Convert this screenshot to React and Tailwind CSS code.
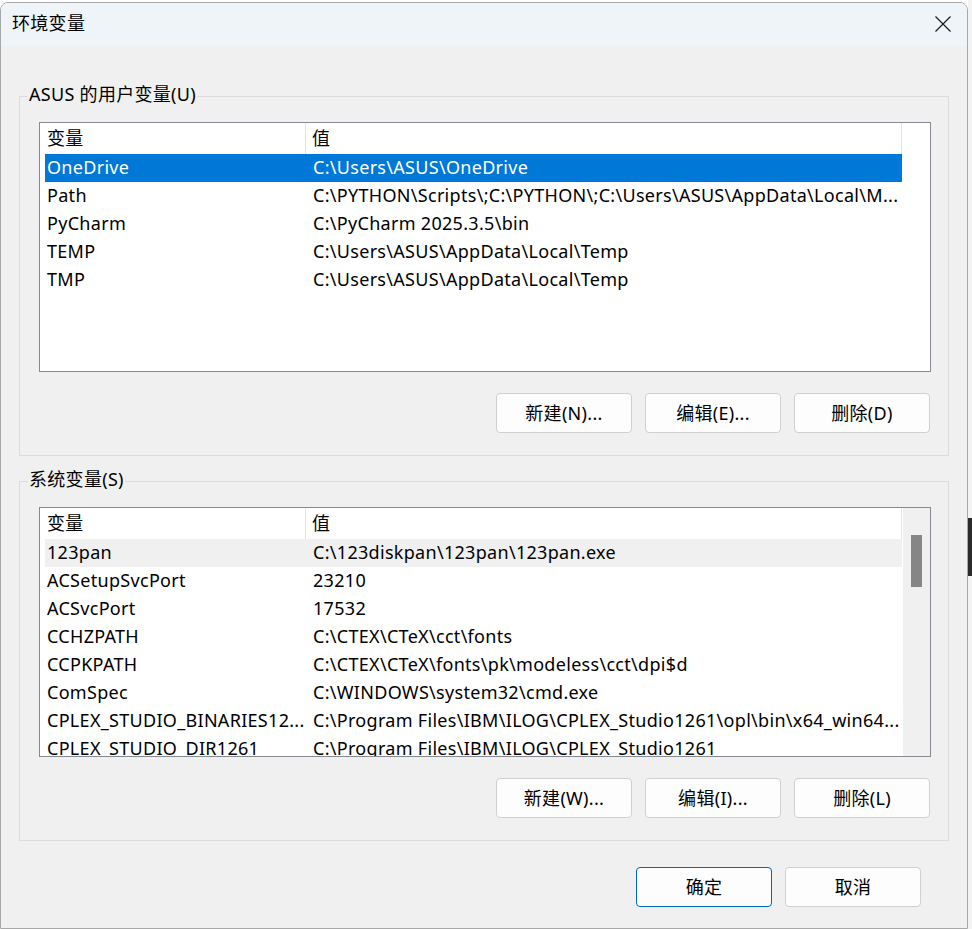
// Windows "环境变量" dialog
const font = { fontFamily: '"Noto Sans", "Noto Sans CJK SC", sans-serif' }

const userVars = [
  ['OneDrive', 'C:\\Users\\ASUS\\OneDrive'],
  ['Path', 'C:\\PYTHON\\Scripts\\;C:\\PYTHON\\;C:\\Users\\ASUS\\AppData\\Local\\M...'],
  ['PyCharm', 'C:\\PyCharm 2025.3.5\\bin'],
  ['TEMP', 'C:\\Users\\ASUS\\AppData\\Local\\Temp'],
  ['TMP', 'C:\\Users\\ASUS\\AppData\\Local\\Temp'],
]

const sysVars = [
  ['123pan', 'C:\\123diskpan\\123pan\\123pan.exe'],
  ['ACSetupSvcPort', '23210'],
  ['ACSvcPort', '17532'],
  ['CCHZPATH', 'C:\\CTEX\\CTeX\\cct\\fonts'],
  ['CCPKPATH', 'C:\\CTEX\\CTeX\\fonts\\pk\\modeless\\cct\\dpi$d'],
  ['ComSpec', 'C:\\WINDOWS\\system32\\cmd.exe'],
  ['CPLEX_STUDIO_BINARIES12...', 'C:\\Program Files\\IBM\\ILOG\\CPLEX_Studio1261\\opl\\bin\\x64_win64...'],
  ['CPLEX_STUDIO_DIR1261', 'C:\\Program Files\\IBM\\ILOG\\CPLEX_Studio1261'],
]

function Button({ children, primary }) {
  return (
    <div
      className={`w-[136px] h-[40px] flex items-center justify-center rounded-[4px] border bg-[#fdfdfd] text-black ${
        primary ? 'border-[#0067c0]' : 'border-[#d0d0d0]'
      }`}
    >
      {children}
    </div>
  )
}

// list view with header row; mode = 'selected' (blue) or 'gray' for first row
function ListView({ rows, mode, scrollbar }) {
  return (
    <div className="h-[250px] border border-[#858992] bg-white flex overflow-hidden">
      <div className="flex-1 flex flex-col">
        {/* header */}
        <div className="h-[31px] flex shrink-0 pl-[5px]">
          <div className="w-[261px] border-r border-[#e5e5e5] flex items-center pl-[2px]">变量</div>
          <div className="w-[596px] border-r border-[#e5e5e5] flex items-center pl-[6px]">值</div>
        </div>
        <div className="flex flex-col pl-[5px]">
          {rows.map(([name, value], i) => {
            const first = i === 0
            const rowBg =
              first && mode === 'selected'
                ? 'bg-[#0078d7] text-white'
                : first && mode === 'gray'
                ? 'bg-[#f0f0f0] text-black'
                : 'text-black'
            return (
              <div
                key={name}
                className={`w-[857px] h-[28px] flex shrink-0 items-center pb-[2px] whitespace-nowrap ${rowBg}`}
              >
                <div className="w-[261px] pl-[2px] overflow-hidden">{name}</div>
                <div className="w-[596px] pl-[7px] overflow-hidden">{value}</div>
              </div>
            )
          })}
        </div>
      </div>
      {scrollbar ? (
        <div className="w-[27px] bg-[#f0f0f0] flex justify-center pt-[27px]">
          <div className="w-[11px] h-[52px] bg-[#868686]" />
        </div>
      ) : (
        <div className="w-[27px]" />
      )}
    </div>
  )
}

function Group({ title, rows, mode, scrollbar, buttons, className }) {
  return (
    <fieldset className={`border border-[#dcdcdc] px-[8px] pb-[22px] ${className}`}>
      <legend className="px-[1px] leading-[21px] pb-[3px]">{title}</legend>
      <div className="ml-[11px] mr-[9px] mt-[14px]">
        <ListView rows={rows} mode={mode} scrollbar={scrollbar} />
        <div className="flex justify-end gap-[13px] mt-[21px] mr-[1px]">
          {buttons.map((b) => (
            <Button key={b}>{b}</Button>
          ))}
        </div>
      </div>
    </fieldset>
  )
}

export default function App() {
  return (
    <div
      className="w-[972px] h-[929px] bg-white flex overflow-hidden text-[18px] tracking-[0.3px] text-black"
      style={font}
    >
      {/* dialog window */}
      <div className="w-[968px] mt-[2px] flex flex-col border border-[#a8a8a8] rounded-t-[8px] overflow-hidden">
        {/* title bar */}
        <div className="h-[43px] shrink-0 bg-[#eff4f9] flex items-center justify-between pl-[11px] pr-[16px]">
          <span className="-mt-[2px]">环境变量</span>
          <svg width="16" height="16" viewBox="0 0 16 16" className="-mt-[1px]">
            <path d="M0.5 0.5 L15.5 15.5 M15.5 0.5 L0.5 15.5" stroke="#1a1a1a" strokeWidth="1.2" fill="none" />
          </svg>
        </div>
        {/* body */}
        <div className="flex-1 bg-[#f0f0f0] px-[18px] pt-[38px]">
          <Group
            title="ASUS 的用户变量(U)"
            rows={userVars}
            mode="selected"
            buttons={['新建(N)...', '编辑(E)...', '删除(D)']}
          />
          <Group
            className="mt-[13px]"
            title="系统变量(S)"
            rows={sysVars}
            mode="gray"
            scrollbar
            buttons={['新建(W)...', '编辑(I)...', '删除(L)']}
          />
          <div className="flex justify-end gap-[13px] mt-[26px] mr-[28px]">
            <Button primary>确定</Button>
            <Button>取消</Button>
          </div>
        </div>
      </div>
      {/* desktop edge */}
      <div className="flex-1 flex flex-col bg-[#f3f3f3]">
        <div className="h-[518px]" />
        <div className="h-[58px] bg-[#2b2b2b]" />
      </div>
    </div>
  )
}
